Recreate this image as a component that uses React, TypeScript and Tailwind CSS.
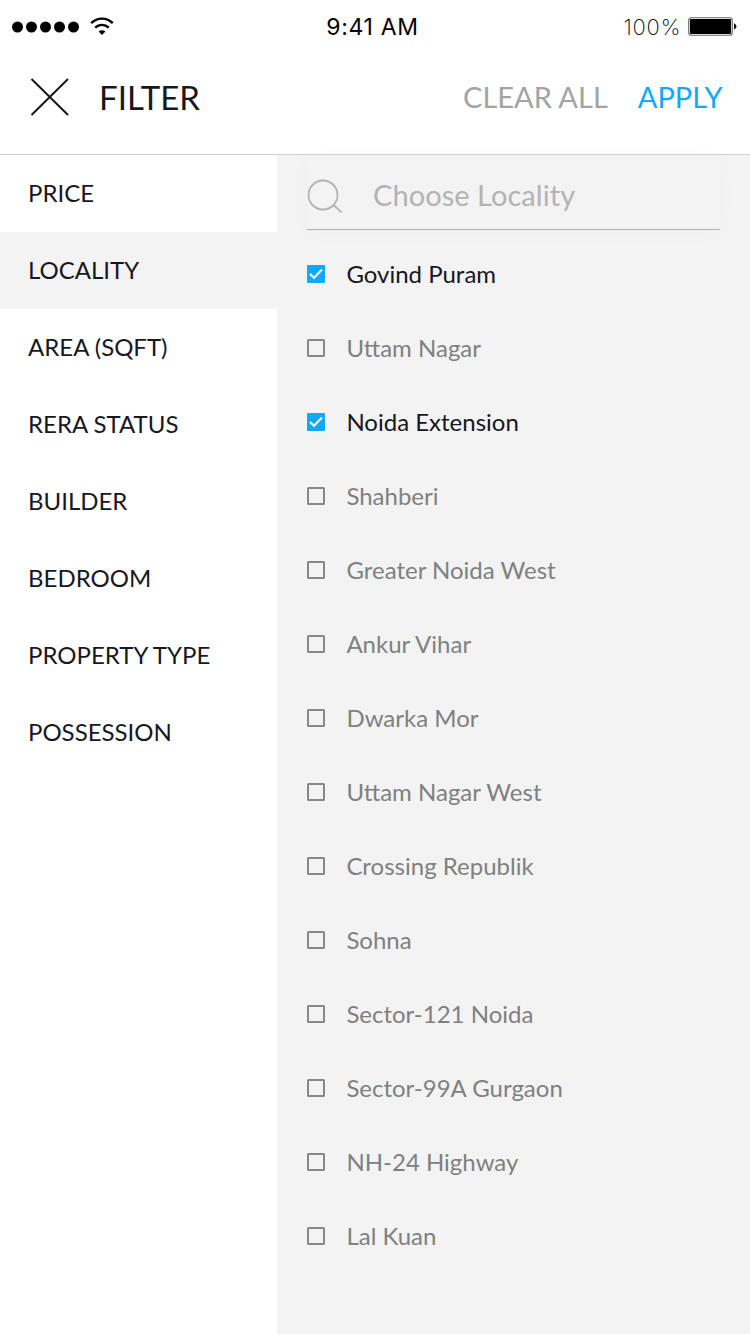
const cats = ['PRICE', 'LOCALITY', 'AREA (SQFT)', 'RERA STATUS', 'BUILDER', 'BEDROOM', 'PROPERTY TYPE', 'POSSESSION'];
const localities: { name: string; checked?: boolean }[] = [
  { name: 'Govind Puram', checked: true },
  { name: 'Uttam Nagar' },
  { name: 'Noida Extension', checked: true },
  { name: 'Shahberi' },
  { name: 'Greater Noida West' },
  { name: 'Ankur Vihar' },
  { name: 'Dwarka Mor' },
  { name: 'Uttam Nagar West' },
  { name: 'Crossing Republik' },
  { name: 'Sohna' },
  { name: 'Sector-121 Noida' },
  { name: 'Sector-99A Gurgaon' },
  { name: 'NH-24 Highway' },
  { name: 'Lal Kuan' },
];

function StatusBar() {
  return (
    <div className="flex h-[53px] items-center font-['Inter',sans-serif] text-black">
      <div className="flex w-[250px] items-center pl-3">
        <svg width="68" height="12" viewBox="0 0 68 12">
          {[0, 1, 2, 3, 4].map((i) => (
            <circle key={i} cx={5.5 + i * 14} cy="6" r="5.5" />
          ))}
        </svg>
        <svg className="ml-[10px]" width="24" height="20" viewBox="0 0 24 20" fill="none" stroke="#000" strokeWidth="2.4">
          <path d="M1.2 6.2C7.3.1 16.7.1 22.8 6.2" />
          <path d="M5.2 10.7c3.9-3.8 9.7-3.8 13.6 0" />
          <path d="M8.6 14.6c2-1.7 4.8-1.7 6.8 0L12 18z" fill="#000" stroke="none" />
        </svg>
      </div>
      <div className="w-[245px] pt-0.5 text-center text-[23px] tracking-[0.65px]">9:41 AM</div>
      <div className="flex flex-1 items-center justify-end pr-[13px]">
        <span className="mr-[7px] pt-0.5 text-[22px] font-extralight tracking-[0.75px]">100%</span>
        <svg width="49" height="20" viewBox="0 0 49 20">
          <rect x="0.75" y="0.75" width="43.5" height="17.5" rx="2.5" fill="none" stroke="#666" strokeWidth="1.2" />
          <rect x="2" y="2" width="41" height="15" rx="1" />
          <path d="M46 6.3q5 3.2 0 6.4z" />
        </svg>
      </div>
    </div>
  );
}

export default function App() {
  return (
    <div className="flex h-[1334px] w-[750px] flex-col overflow-hidden bg-white font-['Lato',sans-serif]">
      <StatusBar />
      <header className="flex h-[102px] items-center border-b border-[#cfcfcf] pb-[13px]">
        <svg className="ml-[30px]" width="40" height="38" viewBox="0 0 40 38" stroke="#17171f" strokeWidth="2">
          <path d="M1.5 1l36.5 36M38 1L1.5 37" />
        </svg>
        <h1 className="ml-[29px] pt-0.5 text-[33px] text-[#17171f]">FILTER</h1>
        <button className="ml-auto text-[29px] text-[#a3a3a3]">CLEAR ALL</button>
        <button className="mr-[27.5px] ml-[30px] text-[29px] text-[#11a9ff]">APPLY</button>
      </header>
      <div className="flex flex-1">
        <nav className="w-[277px]">
          {cats.map((c) => (
            <div key={c} className={`flex h-[77px] items-center pb-0.5 pl-7 text-[24px] text-[#17171f] ${c === 'LOCALITY' ? 'bg-[#f3f3f3]' : ''}`}>
              {c}
            </div>
          ))}
        </nav>
        <section className="flex-1 bg-[#f3f3f3] pr-[30px] pl-[30px]">
          <div className="flex h-[75px] items-center border-b border-[#b0b0b0] pt-[6px] shadow-[0_3px_24px_rgba(0,0,0,0.02)]">
            <svg className="mt-1" width="36" height="36" viewBox="0 0 36 36" fill="none" stroke="#b3b3b3" strokeWidth="1.8">
              <circle cx="16" cy="16" r="14.5" />
              <path d="M26.5 26l8 7.3" />
            </svg>
            <span className="ml-[30px] pb-px text-[29px] tracking-[0.05px] text-[#b3b3b3]">Choose Locality</span>
          </div>
          <div className="mt-[7px]">
            {localities.map((l) => (
              <div key={l.name} className="flex h-[74px] items-center">
                {l.checked ? (
                  <svg width="18" height="18" viewBox="0 0 18 18" fill="none">
                    <rect width="18" height="18" rx="1" fill="#11a9ff" />
                    <path d="M3 9l4 3.8 8-8.3" stroke="#fff" strokeWidth="2" />
                  </svg>
                ) : (
                  <span className="size-[18px] rounded-[1.5px] border-2 border-[#888]" />
                )}
                <span className={`ml-[21.4px] text-[24px] ${l.checked ? 'text-[#17171f]' : 'text-[#808080]'}`}>{l.name}</span>
              </div>
            ))}
          </div>
        </section>
      </div>
    </div>
  );
}
